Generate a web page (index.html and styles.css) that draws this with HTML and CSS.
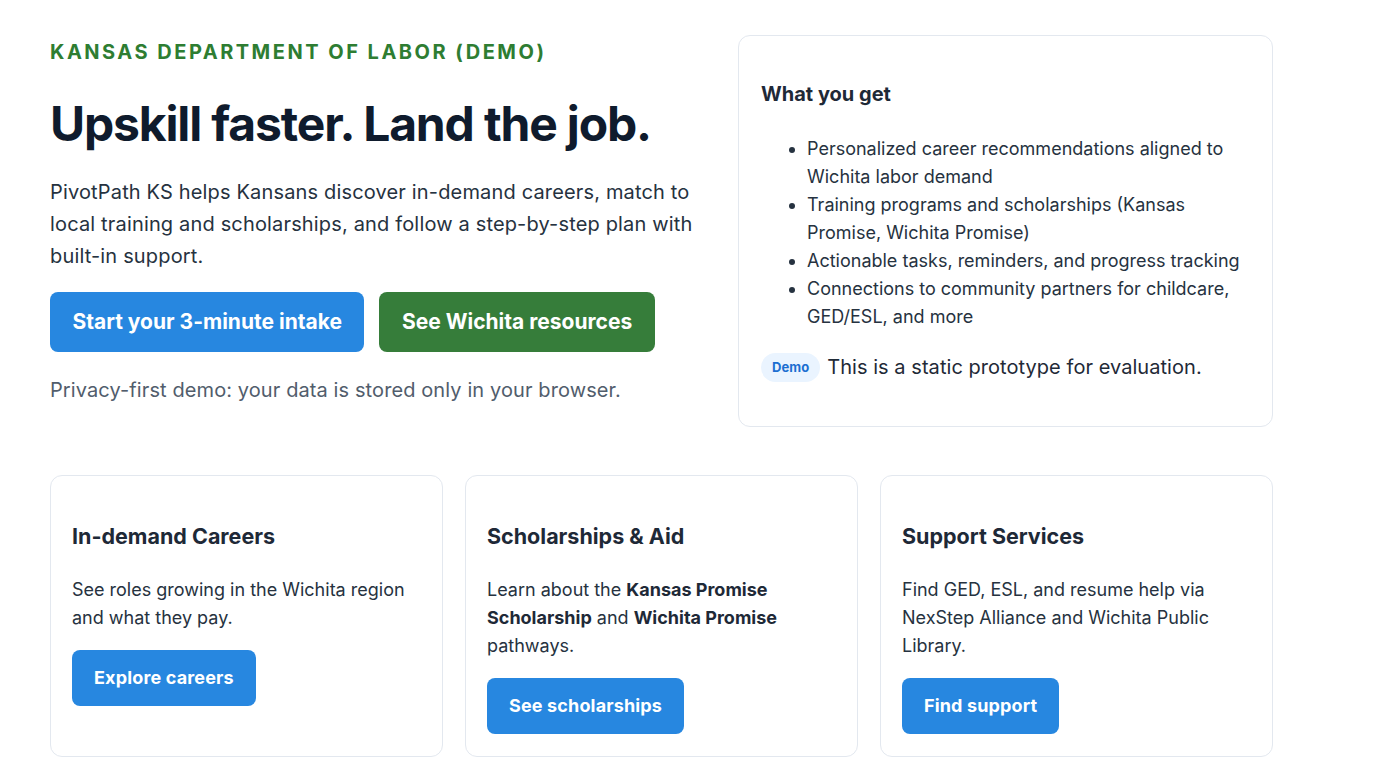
FILE: index.html
```html
<!DOCTYPE html>
<html lang="en">
<head>
<meta charset="utf-8">
<title>PivotPath KS</title>
<link rel="stylesheet" href="styles.css">
</head>
<body>
<main class="page">
  <section class="hero">
    <div class="hero-main">
      <p class="kicker">Kansas Department of Labor (Demo)</p>
      <h1 class="title">Upskill faster. Land the job.</h1>
      <p class="lead">PivotPath KS helps Kansans discover in-demand careers, match to local training and scholarships, and follow a step-by-step plan with built-in support.</p>
      <div class="actions">
        <a class="btn btn-blue btn-lg" href="#">Start your 3-minute intake</a>
        <a class="btn btn-green btn-lg" href="#">See Wichita resources</a>
      </div>
      <p class="privacy">Privacy-first demo: your data is stored only in your browser.</p>
    </div>
    <aside class="card get-card">
      <h2 class="get-title">What you get</h2>
      <ul class="get-list">
        <li>Personalized career recommendations aligned to Wichita labor demand</li>
        <li>Training programs and scholarships (Kansas Promise, Wichita Promise)</li>
        <li>Actionable tasks, reminders, and progress tracking</li>
        <li>Connections to community partners for childcare, GED/ESL, and more</li>
      </ul>
      <p class="demo-row"><span class="badge">Demo</span>This is a static prototype for evaluation.</p>
    </aside>
  </section>

  <section class="features">
    <div class="card feature">
      <h3 class="feature-title">In-demand Careers</h3>
      <p class="feature-text">See roles growing in the Wichita region and what they pay.</p>
      <a class="btn btn-blue" href="#">Explore careers</a>
    </div>
    <div class="card feature">
      <h3 class="feature-title">Scholarships &amp; Aid</h3>
      <p class="feature-text">Learn about the <strong>Kansas Promise Scholarship</strong> and <strong>Wichita Promise</strong> pathways.</p>
      <a class="btn btn-blue" href="#">See scholarships</a>
    </div>
    <div class="card feature">
      <h3 class="feature-title">Support Services</h3>
      <p class="feature-text">Find GED, ESL, and resume help via NexStep Alliance and Wichita Public Library.</p>
      <a class="btn btn-blue" href="#">Find support</a>
    </div>
  </section>
</main>
</body>
</html>
```

FILE: styles.css
```css
* { box-sizing: border-box; }

html, body {
  margin: 0;
  padding: 0;
  background: #ffffff;
}

body {
  font-family: Inter, "Noto Sans", "Liberation Sans", Arial, sans-serif;
  color: #1f2a37;
}

.page {
  width: 1223px;
  margin: 0 0 0 50px;
  padding-top: 35px;
}

.hero {
  display: grid;
  grid-template-columns: 1fr 535px;
  column-gap: 40px;
  align-items: start;
}

.kicker {
  margin: 5px 0 0;
  font-size: 20px;
  line-height: 24px;
  font-weight: 700;
  letter-spacing: 0.125em;
  text-transform: uppercase;
  color: #2e7d32;
}

.title {
  margin: 34px 0 0;
  font-size: 48px;
  line-height: 52.8px;
  font-weight: 700;
  letter-spacing: -0.024em;
  color: #0f1b2d;
}

.lead {
  margin: 25px 0 0;
  font-size: 20px;
  line-height: 32px;
  letter-spacing: 0.16px;
  color: #263240;
}

.actions {
  display: flex;
  gap: 15px;
  margin-top: 20px;
}

.btn {
  display: inline-block;
  text-decoration: none;
  color: #ffffff;
  font-weight: 700;
  font-size: 18px;
  line-height: 28px;
  letter-spacing: 0.15px;
  padding: 14px 22px;
  border-radius: 8px;
}

.btn-lg {
  font-size: 21px;
  line-height: 30px;
  letter-spacing: 0;
  padding: 15px 22.5px;
}

.btn-blue { background: #2787e0; }
.btn-green { background: #367d3a; }

.privacy {
  margin: 22px 0 0;
  font-size: 20px;
  line-height: 32px;
  letter-spacing: 0.1px;
  color: #515d6c;
}

.card {
  border: 1px solid #e3e8ef;
  border-radius: 12px;
  background: #ffffff;
  padding: 22px 21px;
}

.get-card {
  padding: 22px;
}

.get-title {
  margin: 23px 0 28px;
  font-size: 20px;
  line-height: 26px;
  font-weight: 700;
  color: #1e2937;
}

.get-list {
  margin: 0 0 20px;
  padding-left: 46px;
  font-size: 18px;
  line-height: 28px;
  color: #263240;
}

.demo-row {
  margin: 0 0 21px;
  display: flex;
  align-items: center;
  font-size: 20px;
  line-height: 32px;
  letter-spacing: 0.05px;
  color: #1f2a37;
}

.badge {
  display: inline-block;
  background: #eaf4ff;
  color: #1c6fd1;
  font-size: 13px;
  font-weight: 700;
  line-height: 17px;
  padding: 6px 11px;
  border-radius: 999px;
  margin-right: 7px;
}

.features {
  display: grid;
  grid-template-columns: repeat(3, 1fr);
  gap: 22px;
  margin-top: 48px;
}

.feature-title {
  margin: 24px 0 25px;
  font-size: 21.5px;
  line-height: 28.6px;
  font-weight: 700;
  color: #1e2937;
}

.feature-text {
  margin: 0 0 18px;
  font-size: 18px;
  line-height: 28px;
  color: #263240;
}

.feature-text strong {
  font-weight: 700;
  color: #1e2937;
}
```
